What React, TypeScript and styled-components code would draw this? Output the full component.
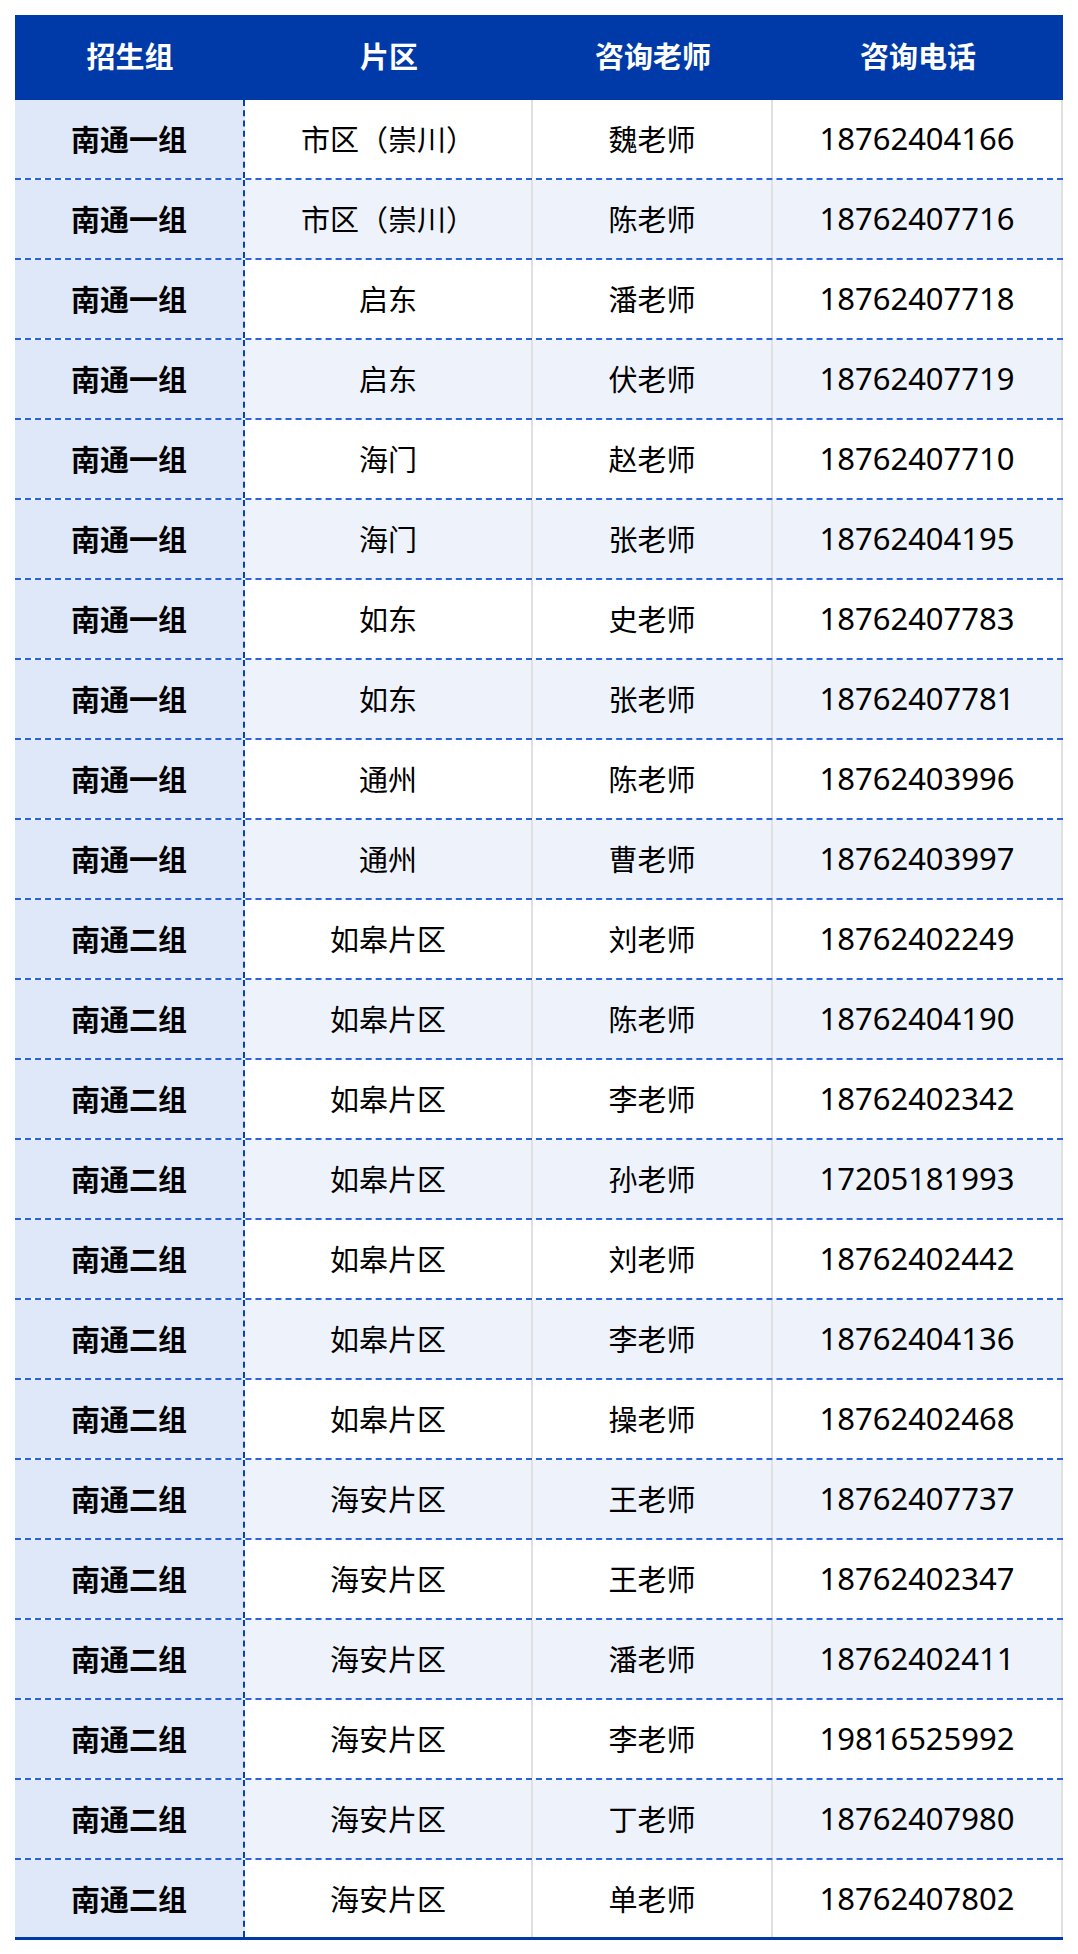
import styled, { createGlobalStyle } from "styled-components";

const GlobalStyle = createGlobalStyle`
  body {
    margin: 0;
    background: #ffffff;
    font-family: "Noto Sans CJK SC", "Noto Sans", sans-serif;
  }
`;

const Page = styled.div`
  padding: 15px 15px 15px 15px;
`;

const Table = styled.div`
  width: 1048px;
  display: flex;
  flex-direction: column;
`;

const columns = "230px 288px 240px 290px";

const HeadRow = styled.div`
  display: grid;
  grid-template-columns: ${columns};
  height: 85px;
  background-color: #003aa8;
`;

const HeadCell = styled.div`
  display: flex;
  align-items: center;
  justify-content: center;
  color: #ffffff;
  font-size: 29px;
  font-weight: 700;
  padding-bottom: 5px;
`;

const Row = styled.div<{ $striped: boolean; $last: boolean }>`
  display: grid;
  grid-template-columns: ${columns};
  height: 80px;
  box-sizing: border-box;
  background-color: ${(p) => (p.$striped ? "#eef3fb" : "#ffffff")};
  border-bottom: ${(p) => (p.$last ? "3px solid #003aa8" : "2px dashed #2a62dd")};
`;

const Cell = styled.div<{ $kind: "group" | "text" | "phone" }>`
  display: flex;
  align-items: center;
  justify-content: center;
  padding-bottom: 2px;
  color: #000000;
  font-size: ${(p) => (p.$kind === "phone" ? "31px" : "29px")};
  font-family: ${(p) =>
    p.$kind === "phone"
      ? '"Noto Sans", "Noto Sans CJK SC", sans-serif'
      : '"Noto Sans CJK SC", "Noto Sans", sans-serif'};
  font-weight: ${(p) => (p.$kind === "group" ? 700 : 400)};
  background-color: ${(p) => (p.$kind === "group" ? "#dfe8f8" : "transparent")};
  border-right: ${(p) =>
    p.$kind === "group" ? "2px dashed #0a3fb5" : "2px solid #e0e0e0"};
`;

const rows: [string, string, string, string][] = [
  ["南通一组", "市区（崇川）", "魏老师", "18762404166"],
  ["南通一组", "市区（崇川）", "陈老师", "18762407716"],
  ["南通一组", "启东", "潘老师", "18762407718"],
  ["南通一组", "启东", "伏老师", "18762407719"],
  ["南通一组", "海门", "赵老师", "18762407710"],
  ["南通一组", "海门", "张老师", "18762404195"],
  ["南通一组", "如东", "史老师", "18762407783"],
  ["南通一组", "如东", "张老师", "18762407781"],
  ["南通一组", "通州", "陈老师", "18762403996"],
  ["南通一组", "通州", "曹老师", "18762403997"],
  ["南通二组", "如皋片区", "刘老师", "18762402249"],
  ["南通二组", "如皋片区", "陈老师", "18762404190"],
  ["南通二组", "如皋片区", "李老师", "18762402342"],
  ["南通二组", "如皋片区", "孙老师", "17205181993"],
  ["南通二组", "如皋片区", "刘老师", "18762402442"],
  ["南通二组", "如皋片区", "李老师", "18762404136"],
  ["南通二组", "如皋片区", "操老师", "18762402468"],
  ["南通二组", "海安片区", "王老师", "18762407737"],
  ["南通二组", "海安片区", "王老师", "18762402347"],
  ["南通二组", "海安片区", "潘老师", "18762402411"],
  ["南通二组", "海安片区", "李老师", "19816525992"],
  ["南通二组", "海安片区", "丁老师", "18762407980"],
  ["南通二组", "海安片区", "单老师", "18762407802"],
];

const App = () => {
  return (
    <Page>
      <GlobalStyle />
      <Table>
        <HeadRow>
          <HeadCell>招生组</HeadCell>
          <HeadCell>片区</HeadCell>
          <HeadCell>咨询老师</HeadCell>
          <HeadCell>咨询电话</HeadCell>
        </HeadRow>
        {rows.map((r, i) => (
          <Row key={i} $striped={i % 2 === 1} $last={i === rows.length - 1}>
            <Cell $kind="group">{r[0]}</Cell>
            <Cell $kind="text">{r[1]}</Cell>
            <Cell $kind="text">{r[2]}</Cell>
            <Cell $kind="phone">{r[3]}</Cell>
          </Row>
        ))}
      </Table>
    </Page>
  );
};

export default App;
